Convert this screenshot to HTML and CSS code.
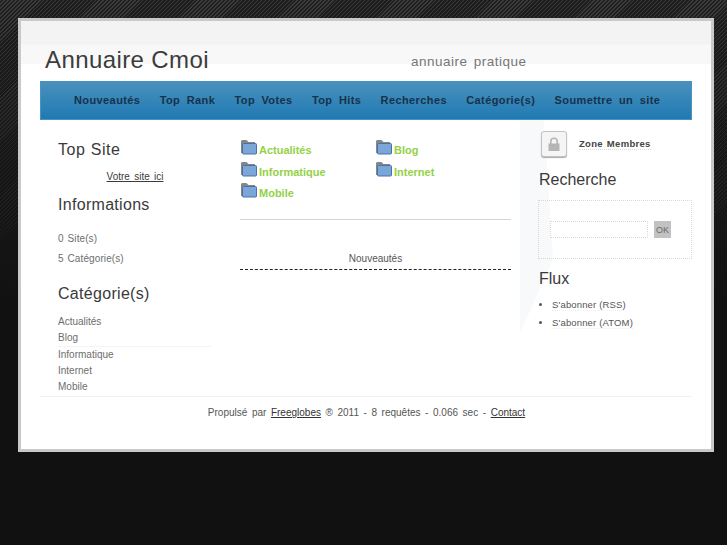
FILE: index.html
```html
<!DOCTYPE html>
<html lang="fr">
<head>
<meta charset="utf-8">
<title>Annuaire Cmoi</title>
<link rel="stylesheet" href="styles.css">
</head>
<body>
<div class="page">
  <header class="header">
    <h1 class="site-title">Annuaire Cmoi</h1>
    <p class="site-tagline">annuaire pratique</p>
  </header>
  <nav class="nav">
    <a href="#">Nouveautés</a>
    <a href="#">Top Rank</a>
    <a href="#">Top Votes</a>
    <a href="#">Top Hits</a>
    <a href="#">Recherches</a>
    <a href="#">Catégorie(s)</a>
    <a href="#">Soumettre un site</a>
  </nav>
  <main class="columns">
    <aside class="left">
      <h2 class="h-top">Top Site</h2>
      <p class="votre"><a href="#">Votre site ici</a></p>
      <h2 class="h-info">Informations</h2>
      <p class="stat stat-first">0 Site(s)</p>
      <p class="stat">5 Catégorie(s)</p>
      <h2 class="h-cat">Catégorie(s)</h2>
      <ul class="cat-list">
        <li>Actualités</li>
        <li class="ruled">Blog</li>
        <li>Informatique</li>
        <li>Internet</li>
        <li class="last">Mobile</li>
      </ul>
    </aside>
    <section class="center">
      <div class="folders">
        <a class="folder" href="#"><svg class="ficon" viewBox="0 0 16 15"><path d="M0 13V1L1 0H5.5L7.5 2H14V5H2V13Z" fill="#868686"/><rect x="1.5" y="3.5" width="14" height="10.5" rx="1" fill="#7ba6d8" stroke="#4a70a8"/></svg>Actualités</a>
        <a class="folder" href="#"><svg class="ficon" viewBox="0 0 16 15"><path d="M0 13V1L1 0H5.5L7.5 2H14V5H2V13Z" fill="#868686"/><rect x="1.5" y="3.5" width="14" height="10.5" rx="1" fill="#7ba6d8" stroke="#4a70a8"/></svg>Blog</a>
        <a class="folder" href="#"><svg class="ficon" viewBox="0 0 16 15"><path d="M0 13V1L1 0H5.5L7.5 2H14V5H2V13Z" fill="#868686"/><rect x="1.5" y="3.5" width="14" height="10.5" rx="1" fill="#7ba6d8" stroke="#4a70a8"/></svg>Informatique</a>
        <a class="folder" href="#"><svg class="ficon" viewBox="0 0 16 15"><path d="M0 13V1L1 0H5.5L7.5 2H14V5H2V13Z" fill="#868686"/><rect x="1.5" y="3.5" width="14" height="10.5" rx="1" fill="#7ba6d8" stroke="#4a70a8"/></svg>Internet</a>
        <a class="folder" href="#"><svg class="ficon" viewBox="0 0 16 15"><path d="M0 13V1L1 0H5.5L7.5 2H14V5H2V13Z" fill="#868686"/><rect x="1.5" y="3.5" width="14" height="10.5" rx="1" fill="#7ba6d8" stroke="#4a70a8"/></svg>Mobile</a>
      </div>
      <h3 class="news">Nouveautés</h3>
    </section>
    <aside class="right">
      <div class="wedge"></div>
      <div class="member">
        <span class="lock"><svg viewBox="0 0 14 14" width="14" height="14"><path d="M3.8 7V4.5a3.2 3.2 0 0 1 6.4 0V7" fill="none" stroke="#b5b5b5" stroke-width="1.6"/><rect x="1.5" y="6.5" width="11" height="7.5" fill="#b5b5b5"/></svg></span>
        <a class="member-link" href="#">Zone Membres</a>
      </div>
      <h2 class="h-search">Recherche</h2>
      <form class="search">
        <input class="search-input" type="text">
        <button class="search-btn" type="button">OK</button>
      </form>
      <h2 class="h-flux">Flux</h2>
      <ul class="flux-list">
        <li><a href="#">S'abonner (RSS)</a></li>
        <li><a href="#">S'abonner (ATOM)</a></li>
      </ul>
    </aside>
  </main>
  <footer class="footer">
    Propulsé par <a href="#">Freeglobes</a> ® 2011 - 8 requêtes - 0.066 sec - <a href="#">Contact</a>
  </footer>
</div>
</body>
</html>
```

FILE: styles.css
```css
* { box-sizing: border-box; }
html, body { margin: 0; height: 545px; overflow: hidden; }
body {
  font-family: "Liberation Sans", Arial, sans-serif;
  background-color: #111;
  background-image:
    linear-gradient(to bottom, rgba(17,17,17,0) 0, rgba(17,17,17,0.25) 60px, #111 300px),
    repeating-linear-gradient(135deg, #3c3c3c 0, #3c3c3c 1px, #1e1e1e 1px, #1e1e1e 2.8px);
  padding: 18px 13px 0 18px;
}
.page {
  height: 434px;
  width: 696px;
  border: 3px solid #c9c9c9;
  background: linear-gradient(to bottom, #f3f3f3 0, #f3f3f3 23px, #f8f8f9 24px, #f8f8f9 43px, #fff 43px);
  padding: 0 19px;
  position: relative;
}
a { color: inherit; }

.header { height: 60px; display: flex; }
.site-title {
  margin: 24px 0 0 5px;
  font-size: 24px;
  line-height: 30px;
  font-weight: 400;
  color: #3c3c3c;
  letter-spacing: 0.4px;
  word-spacing: 0;
}
.site-tagline {
  margin: 32px 0 0 202px;
  font-size: 13.5px;
  line-height: 18px;
  color: #777;
  letter-spacing: 0.5px;
  word-spacing: 2px;
}

.nav {
  height: 39px;
  width: 652px;
  display: flex;
  align-items: center;
  padding: 0 0 2px 33px;
  gap: 19.3px;
  background: linear-gradient(to bottom, #4a90bd, #1f7ab3);
  border: 1px solid #4a93c0;
}
.nav a {
  font-size: 11px;
  font-weight: 700;
  color: #17324a;
  text-decoration: none;
  letter-spacing: 0.4px;
  word-spacing: 3px;
}

.columns { display: flex; height: 277px; border-bottom: 1px solid #f2f2f2; }

.left { width: 200px; flex: none; padding-left: 18px; color: #3c3c3c; }
h2 { font-weight: 400; margin: 0; color: #3a3a3a; }
.left h2 { font-size: 16px; line-height: 20px; letter-spacing: 0.3px; }
.left .h-top { letter-spacing: 0.6px; }
.h-top { margin-top: 20px; }
.votre { margin: 10px 0 0; text-align: center; font-size: 10px; line-height: 14px; width: 154px; word-spacing: 1.5px; }
.h-info { margin-top: 11px; }
.stat { margin: 0; font-size: 10px; line-height: 20px; color: #6e6e6e; word-spacing: 1px; letter-spacing: 0.1px; }
.stat-first { margin-top: 14px; }
.h-cat { margin-top: 15px; }
.cat-list { list-style: none; margin: 10px 0 0; padding: 0; width: 153px; font-size: 10px; color: #6e6e6e; }
.cat-list li { height: 16.3px; line-height: 16px; }
.cat-list .ruled { border-bottom: 1px solid #f4f4f4; }

.center { width: 271px; flex: none; }
.folders { display: grid; grid-template-columns: 135px 135px; grid-auto-rows: 21.7px; padding-top: 19px; height: 100px; border-bottom: 1px solid #d4d4d4; }
.folder {
  display: flex;
  align-items: flex-end;
  height: 18px;
  font-size: 11px;
  font-weight: 700;
  color: #93d146;
  text-decoration: none;
  line-height: 13px;
}
.ficon { width: 16px; height: 15px; margin: 0 2px 2px 1px; flex: none; }
.news {
  margin: 30px 0 0;
  height: 20px;
  text-align: center;
  font-size: 10px;
  line-height: 17px;
  font-weight: 400;
  color: #555;
  border-bottom: 1px dashed #222;
}

.right { width: 181px; flex: none; position: relative; padding-left: 18px; margin-left: 9px; }
.wedge {
  position: absolute;
  left: 0; top: 0;
  width: 34px; height: 213px;
  background: #f8f9fb;
  clip-path: polygon(0 0, 24px 0, 33px 140px, 0 213px);
}
.member { display: flex; align-items: center; height: 30px; margin-top: 9px; position: relative; }
.lock {
  width: 26px; height: 26px;
  display: flex; align-items: center; justify-content: center;
  border: 1px solid #c2c2c2;
  border-radius: 3px;
  background: #f5f5f5;
  box-shadow: 0 1px 1px #aaa;
  margin-left: 3px;
}
.member-link {
  margin-left: 12px;
  font-size: 9.5px;
  font-weight: 700;
  color: #444;
  text-decoration: none;
  border-bottom: 1px dotted #ddd;
  letter-spacing: 0.3px;
  word-spacing: 1px;
}
.h-search { font-size: 16px; line-height: 20px; margin-top: 11px; margin-left: 1px; position: relative; }
.search {
  position: relative;
  width: 154px; height: 59px;
  margin-top: 10px;
  border: 1px dotted #d8d8d8;
  display: flex; align-items: center;
  padding: 0 0 0 11px;
  gap: 6px;
}
.search-input { width: 98px; height: 17px; border: 1px dotted #d8d8d8; background: #fff; padding: 0; }
.search-btn { width: 17px; height: 17px; border: 0; padding: 0; background: #c2c2c2; color: #6a6a6a; font: 9px "Liberation Sans", sans-serif; }
.h-flux { font-size: 16px; line-height: 20px; margin-top: 10px; margin-left: 1px; position: relative; }
.flux-list { position: relative; list-style: disc; margin: 8px 0 0; padding: 0 0 0 14px; font-size: 9.5px; color: #555; }
.flux-list li { height: 17.5px; line-height: 15px; letter-spacing: 0.15px; }
.flux-list a { text-decoration: none; border-bottom: 1px dotted #eee; }

.footer { text-align: center; font-size: 10px; line-height: 14px; color: #555; padding: 9px 0 0 1px; word-spacing: 1.8px; }
.footer a { color: #333; }
```
